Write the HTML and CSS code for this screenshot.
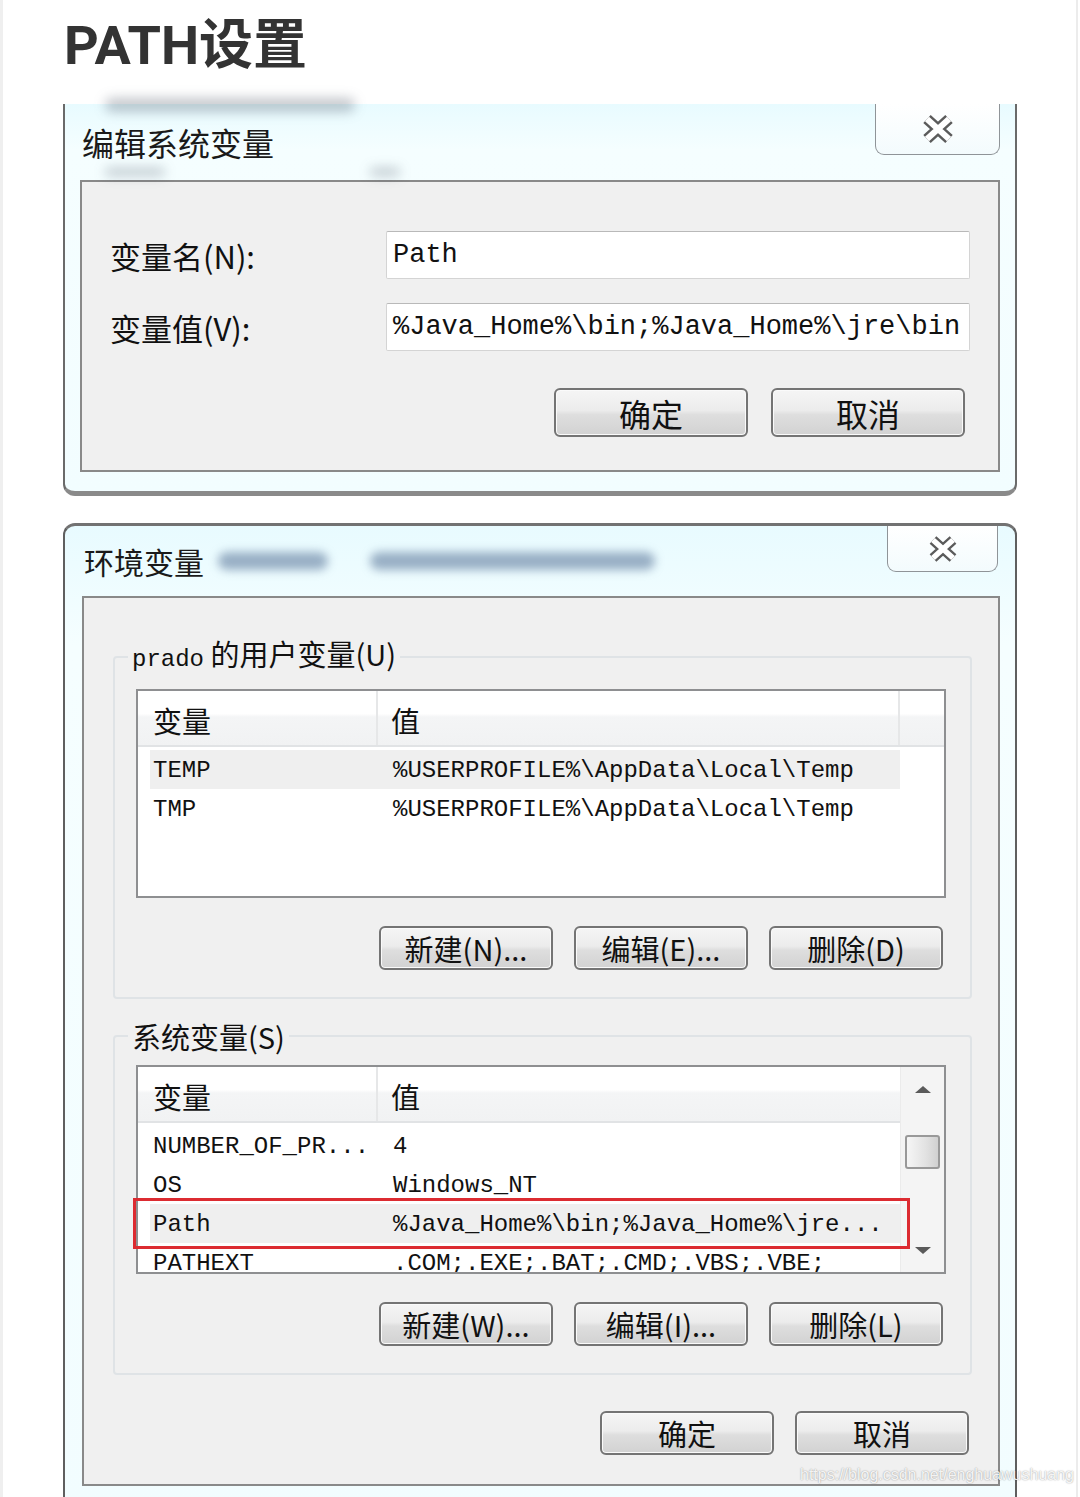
FILE: index.html
```html
<!DOCTYPE html>
<html lang="zh-CN">
  <head>
    <meta charset="UTF-8" />
    <meta name="viewport" content="width=device-width, initial-scale=1.0" />
    <title>PATH设置</title>
    <link rel="stylesheet" href="styles.css">
  </head>
  <body>
    <div class="page">
      <h2 class="post-title">PATH设置</h2>

      <!-- 编辑系统变量 -->
      <div class="dialog dialog-edit">
        <div class="smudge smudge-top"></div>
        <div class="smudge smudge-left"></div>
        <div class="smudge smudge-mid"></div>
        <div class="titlebar">
          <span class="title">编辑系统变量</span>
          <span class="close-btn">
            <svg width="36" height="32" viewBox="0 0 36 32">
              <path d="M7 6 L29 26 M29 6 L7 26" stroke="#5b5b5b" stroke-width="11" />
              <path d="M7 6 L29 26 M29 6 L7 26" stroke="#fff" stroke-width="6" />
            </svg>
          </span>
        </div>
        <div class="panel">
          <div class="field">
            <span class="label">变量名(N):</span>
            <div class="textbox mono">Path</div>
          </div>
          <div class="field">
            <span class="label">变量值(V):</span>
            <div class="textbox mono">%Java_Home%\bin;%Java_Home%\jre\bin</div>
          </div>
          <div class="actions">
            <button class="btn btn-lg">确定</button>
            <button class="btn btn-lg">取消</button>
          </div>
        </div>
      </div>

      <!-- 环境变量 -->
      <div class="dialog dialog-env">
        <div class="titlebar">
          <span class="title">环境变量</span>
          <span class="blur-blob blob-a"></span>
          <span class="blur-blob blob-b"></span>
          <span class="close-btn">
            <svg width="34" height="30" viewBox="0 0 34 30">
              <path d="M7 6 L27 24 M27 6 L7 24" stroke="#5b5b5b" stroke-width="10" />
              <path d="M7 6 L27 24 M27 6 L7 24" stroke="#fff" stroke-width="5.5" />
            </svg>
          </span>
        </div>
        <div class="panel">
          <fieldset class="group group-user">
            <legend><span class="mono">prado</span> 的用户变量(U)</legend>
            <div class="list">
              <div class="list-head">
                <div class="col-name">变量</div>
                <div class="col-value">值</div>
                <div class="col-rest"></div>
              </div>
              <div class="rows">
                <div class="row hl"><span class="cell-name">TEMP</span><span class="cell-value">%USERPROFILE%\AppData\Local\Temp</span></div>
                <div class="row"><span class="cell-name">TMP</span><span class="cell-value">%USERPROFILE%\AppData\Local\Temp</span></div>
              </div>
            </div>
            <div class="group-actions">
              <button class="btn">新建(N)...</button>
              <button class="btn">编辑(E)...</button>
              <button class="btn">删除(D)</button>
            </div>
          </fieldset>

          <fieldset class="group group-system">
            <legend>系统变量(S)</legend>
            <div class="list list-scroll">
              <div class="list-body">
                <div class="list-head">
                  <div class="col-name">变量</div>
                  <div class="col-value">值</div>
                </div>
                <div class="rows">
                  <div class="row"><span class="cell-name">NUMBER_OF_PR...</span><span class="cell-value">4</span></div>
                  <div class="row"><span class="cell-name">OS</span><span class="cell-value">Windows_NT</span></div>
                  <div class="row hl"><span class="cell-name">Path</span><span class="cell-value">%Java_Home%\bin;%Java_Home%\jre...</span></div>
                  <div class="row"><span class="cell-name">PATHEXT</span><span class="cell-value">.COM;.EXE;.BAT;.CMD;.VBS;.VBE;</span></div>
                </div>
              </div>
              <div class="scrollbar">
                <div class="arrow"><span class="tri-up"></span></div>
                <div class="thumb"></div>
                <div class="arrow arrow-down"><span class="tri-down"></span></div>
              </div>
              <div class="mark"></div>
            </div>
            <div class="group-actions">
              <button class="btn">新建(W)...</button>
              <button class="btn">编辑(I)...</button>
              <button class="btn">删除(L)</button>
            </div>
          </fieldset>

          <div class="dialog-actions">
            <button class="btn">确定</button>
            <button class="btn">取消</button>
          </div>
        </div>
      </div>

      <div class="watermark">https://blog.csdn.net/enghuawushuang</div>
    </div>
  </body>
</html>
```

FILE: styles.css
```css
* {
  box-sizing: border-box;
}

body {
  margin: 0;
  background-color: #fff;
  font-family: 'Noto Sans CJK SC', sans-serif;
  color: #111;
}

.page {
  position: relative;
  width: 1078px;
  height: 1497px;
  overflow: hidden;
  border-left: 3px solid #efefef;
  border-right: 2px solid #ececec;
}

.post-title {
  margin: 15px 0 27px 61px;
  height: 62px;
  font-family: 'Roboto', 'Noto Sans CJK SC', sans-serif;
  font-size: 54px;
  line-height: 62px;
  font-weight: bold;
  color: #333;
}

.mono {
  font-family: 'Liberation Mono', monospace;
}

/* window frame */
.dialog {
  position: relative;
  margin-left: 60px;
  width: 954px;
  background: linear-gradient(180deg, #e8fbff 0%, #f5feff 12%, #f2fdff 100%);
}

.titlebar {
  display: flex;
  align-items: center;
}

.title {
  line-height: 1;
  color: #1a1a1a;
}

.close-btn {
  display: flex;
  align-items: center;
  justify-content: center;
  align-self: flex-start;
  margin-left: auto;
  border: 1px solid #8f9498;
  border-top: none;
  border-radius: 0 0 9px 9px;
  background: linear-gradient(180deg, #ffffff, #f3fbfd);
}

.panel {
  background-color: #f0f0f0;
  border: 2px solid #898989;
}

.btn {
  display: flex;
  align-items: center;
  justify-content: center;
  padding: 0;
  border: 2px solid #747474;
  border-radius: 6px;
  background: linear-gradient(180deg, #f5f5f5 0%, #ececec 45%, #dedede 55%, #d2d2d2 100%);
  box-shadow: inset 0 0 0 1px #fafafa;
  font-family: 'Noto Sans CJK SC', sans-serif;
  color: #111;
  width: 174px;
  height: 44px;
  font-size: 29px;
  line-height: 1;
}

/* 编辑系统变量 */
.dialog-edit {
  height: 392px;
  border: 2px solid #6a6a6a;
  border-top: none;
  border-bottom: 5px solid #8a8a8a;
  border-radius: 0 0 12px 12px;
}

.dialog-edit .titlebar {
  height: 76px;
  padding-left: 17px;
}

.dialog-edit .title {
  font-size: 32px;
}

.dialog-edit .close-btn {
  width: 125px;
  height: 51px;
  margin-right: 15px;
}

.dialog-edit .panel {
  margin: 0 15px;
  height: 292px;
  padding: 49px 28px 0 28px;
}

.field {
  display: flex;
  align-items: center;
}

.field + .field {
  margin-top: 24px;
}

.field .label {
  width: 276px;
  font-size: 31px;
  line-height: 1;
}

.textbox {
  width: 584px;
  height: 48px;
  padding-left: 6px;
  background-color: #fff;
  border: 1px solid #d4d4d4;
  border-top-color: #b9b9b9;
  border-radius: 2px;
  font-size: 27px;
  line-height: 46px;
  white-space: nowrap;
  overflow: hidden;
}

.actions {
  display: flex;
  justify-content: flex-end;
  gap: 23px;
  margin-top: 37px;
  padding-right: 5px;
}

.btn-lg {
  width: 194px;
  height: 49px;
  font-size: 32px;
}

.smudge {
  position: absolute;
  background-color: rgba(60, 70, 85, 0.3);
  filter: blur(6px);
  border-radius: 8px;
}

.smudge-top {
  top: -6px;
  left: 40px;
  width: 250px;
  height: 14px;
}

.smudge-left {
  top: 64px;
  left: 40px;
  width: 60px;
  height: 8px;
}

.smudge-mid {
  top: 64px;
  left: 305px;
  width: 30px;
  height: 8px;
}

/* 环境变量 */
.dialog-env {
  margin-top: 27px;
  height: 1000px;
  border: 2px solid #5f5f5f;
  border-top: 3px solid #727272;
  border-radius: 12px 12px 0 0;
}

.dialog-env .titlebar {
  height: 70px;
  padding-left: 19px;
}

.dialog-env .title {
  font-size: 30px;
}

.blur-blob {
  height: 18px;
  border-radius: 9px;
  background-color: rgba(70, 100, 140, 0.5);
  filter: blur(5px);
}

.blob-a {
  width: 110px;
  margin-left: 14px;
}

.blob-b {
  width: 285px;
  margin-left: 42px;
}

.dialog-env .close-btn {
  width: 111px;
  height: 46px;
  margin-right: 17px;
}

.dialog-env .panel {
  margin: 0 15px 0 17px;
  padding-bottom: 29px;
}

.group {
  margin: 38px 26px 0 29px;
  padding: 0 24px 27px 21px;
  border: 2px solid #dfe3e6;
  border-radius: 4px;
  min-width: 0;
}

.group-system {
  margin-top: 20px;
}

.group legend {
  margin-left: -8px;
  padding: 0 4px;
  font-size: 29px;
  line-height: 34px;
}

.group legend .mono {
  font-size: 24px;
}

.list {
  position: relative;
  margin-top: 12px;
  height: 209px;
  border: 2px solid #8e8f91;
  background-color: #fff;
  overflow: hidden;
}

.list-scroll {
  display: flex;
  overflow: visible;
}

.list-body {
  flex: 1;
  overflow: hidden;
}

.list-head {
  display: flex;
  height: 56px;
  background: linear-gradient(180deg, #ffffff 0%, #ffffff 42%, #f4f5f6 48%, #f1f2f3 100%);
  border-bottom: 2px solid #e1e3e5;
  font-size: 29px;
  line-height: 58px;
}

.col-name {
  width: 240px;
  padding-left: 15px;
  border-right: 2px solid #e6e7e8;
}

.col-value {
  width: 522px;
  padding-left: 13px;
  border-right: 2px solid #e6e7e8;
}

.list-scroll .col-value {
  flex: 1;
  border-right: none;
}

.rows {
  padding-top: 3px;
}

.row {
  display: flex;
  margin-left: 12px;
  width: 750px;
  height: 39px;
  font-family: 'Liberation Mono', monospace;
  font-size: 24px;
  line-height: 41px;
  white-space: nowrap;
}

.row.hl {
  background-color: #efefef;
}

.cell-name {
  width: 228px;
  padding-left: 3px;
}

.cell-value {
  padding-left: 15px;
}

.scrollbar {
  display: flex;
  flex-direction: column;
  align-items: center;
  width: 44px;
  background-color: #f4f4f4;
  border-left: 1px solid #ebebeb;
}

.arrow {
  display: flex;
  align-items: center;
  justify-content: center;
  width: 100%;
  height: 44px;
}

.arrow-down {
  margin-top: auto;
}

.tri-up {
  border-left: 8px solid transparent;
  border-right: 8px solid transparent;
  border-bottom: 7px solid #5a5a5a;
}

.tri-down {
  border-left: 8px solid transparent;
  border-right: 8px solid transparent;
  border-top: 7px solid #5a5a5a;
}

.thumb {
  margin-top: 24px;
  width: 35px;
  height: 34px;
  border: 2px solid #999;
  border-radius: 3px;
  background: linear-gradient(90deg, #f6f6f6, #e2e2e2 60%, #d0d0d0);
}

.mark {
  position: absolute;
  left: -5px;
  top: 131px;
  width: 777px;
  height: 51px;
  border: 3px solid #dc2b31;
}

.group-actions {
  display: flex;
  justify-content: flex-end;
  gap: 21px;
  margin-top: 28px;
  padding-right: 3px;
}

.dialog-actions {
  display: flex;
  justify-content: flex-end;
  gap: 21px;
  margin-top: 36px;
  padding-right: 29px;
}

.watermark {
  position: absolute;
  left: 797px;
  top: 1466px;
  font-family: 'Liberation Sans', sans-serif;
  font-size: 16px;
  color: rgba(255, 255, 255, 0.9);
  text-shadow: 0 0 1.5px rgba(0, 0, 0, 0.45);
}
```
